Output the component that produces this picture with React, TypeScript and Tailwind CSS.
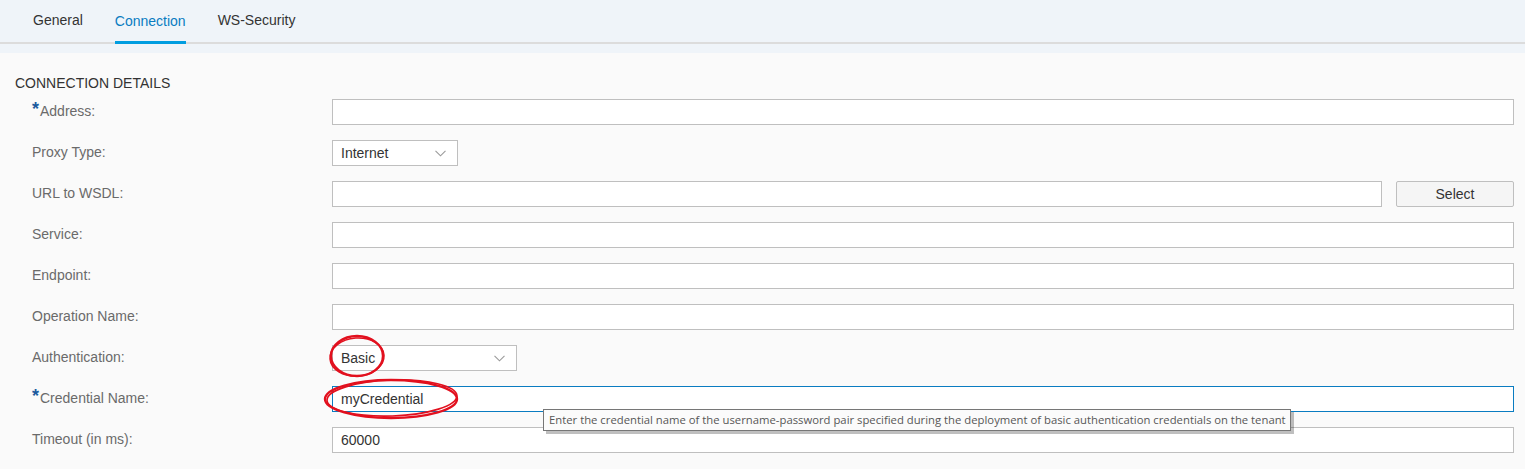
import React from 'react';

const font = { fontFamily: '"Liberation Sans", Arial, sans-serif' };

const Chevron = () => (
  <svg width="11" height="7" viewBox="0 0 11 7" className="shrink-0">
    <path d="M0.5 0.8 L5.5 5.8 L10.5 0.8" fill="none" stroke="#9a9a9a" strokeWidth="1.1" />
  </svg>
);

const Label: React.FC<{ text: string; required?: boolean }> = ({ text, required }) => (
  <div className="w-[300px] shrink-0 text-[14px] text-[#6a6a6a] flex items-center pb-[2px]">
    {required ? (
      <span className="text-[#1b5a9e] font-bold text-[18px] leading-none -mt-[4px] w-[8px]">*</span>
    ) : null}
    <span>{text}</span>
  </div>
);

const Input: React.FC<{ value?: string; focused?: boolean; className?: string }> = ({ value, focused, className }) => (
  <div
    className={`h-[26px] flex items-center px-[8px] text-[14px] text-[#333333] bg-white border ${
      focused ? 'border-[#0a7cc1]' : 'border-[#bfbfbf]'
    } ${className ?? 'flex-1'}`}
  >
    {value}
  </div>
);

const Select: React.FC<{ value: string; width: string }> = ({ value, width }) => (
  <div className={`h-[26px] ${width} flex items-center justify-between pl-[8px] pr-[11px] text-[14px] text-[#333333] bg-white border border-[#bfbfbf]`}>
    <span>{value}</span>
    <Chevron />
  </div>
);

const Row: React.FC<{ children: React.ReactNode }> = ({ children }) => (
  <div className="flex items-center h-[26px] pl-[32px] pr-[11px]">{children}</div>
);

export default function App() {
  return (
    <div className="relative w-[1525px] h-[469px] bg-[#fafafa] overflow-hidden" style={font}>
      <div className="bg-[#eff4f9]">
        <div className="h-[44px] flex border-b-2 border-[#dcdcdc] pl-[33px] gap-[32px]">
          <div className="flex items-center text-[14px] text-[#333333] pb-[2px]">General</div>
          <div className="flex items-center text-[14px] text-[#0a7cc1] border-b-[3px] border-[#009de0] -mb-[2px] pt-[1px]">
            Connection
          </div>
          <div className="flex items-center text-[14px] text-[#333333] pb-[2px]">WS-Security</div>
        </div>
        <div className="h-[9px]" />
      </div>

      <div className="pt-[22px] pl-[15px] text-[14px] text-[#333333] leading-[16px]">CONNECTION DETAILS</div>

      <div className="flex flex-col gap-[15px] mt-[8px]">
        <Row>
          <Label text="Address:" required />
          <Input />
        </Row>
        <Row>
          <Label text="Proxy Type:" />
          <Select value="Internet" width="w-[126px]" />
        </Row>
        <Row>
          <Label text="URL to WSDL:" />
          <Input />
          <button className="ml-[14px] w-[118px] h-[26px] text-[14px] text-[#333333] bg-[#f5f5f5] border border-[#bfbfbf] rounded-[2px]">
            Select
          </button>
        </Row>
        <Row>
          <Label text="Service:" />
          <Input />
        </Row>
        <Row>
          <Label text="Endpoint:" />
          <Input />
        </Row>
        <Row>
          <Label text="Operation Name:" />
          <Input />
        </Row>
        <Row>
          <Label text="Authentication:" />
          <Select value="Basic" width="w-[185px]" />
        </Row>
        <Row>
          <Label text="Credential Name:" required />
          <Input value="myCredential" focused />
        </Row>
        <Row>
          <Label text="Timeout (in ms):" />
          <Input value="60000" />
        </Row>
      </div>

      {/* tooltip */}
      <div
        className="absolute left-[543px] top-[409px] w-[748px] h-[22px] px-[5px] flex items-center bg-[#fbfbfb] border border-[#767676] text-[#575757] text-[11.3px] whitespace-nowrap shadow-[3px_3px_0_rgba(0,0,0,0.25)]"
        style={{ fontFamily: '"Open Sans", "Noto Sans", sans-serif' }}
      >
        Enter the credential name of the username-password pair specified during the deployment of basic authentication credentials on the tenant
      </div>

      {/* hand-drawn annotations */}
      <svg className="absolute left-0 top-0 pointer-events-none" width="1525" height="469">
        <ellipse cx="357" cy="356" rx="26" ry="20" fill="none" stroke="#e2101e" strokeWidth="2.4" />
        <ellipse cx="357" cy="357" rx="27" ry="19" fill="none" stroke="#e2101e" strokeWidth="1.6" transform="rotate(-4 357 357)" />
        <ellipse cx="391" cy="399" rx="66" ry="19" fill="none" stroke="#e2101e" strokeWidth="2.4" />
        <ellipse cx="392" cy="398" rx="65" ry="18" fill="none" stroke="#e2101e" strokeWidth="1.6" transform="rotate(-2 392 398)" />
      </svg>
    </div>
  );
}
